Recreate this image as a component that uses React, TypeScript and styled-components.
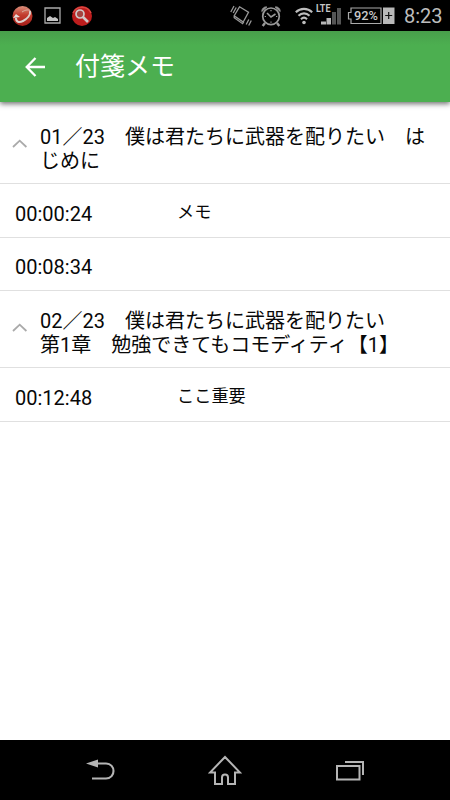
import React from 'react';
import styled, { createGlobalStyle } from 'styled-components';

const GlobalStyle = createGlobalStyle`
  * { box-sizing: border-box; }
  body {
    margin: 0;
    background: #fff;
    color: #080808;
    font-family: Roboto, "Noto Sans CJK JP", sans-serif;
  }
  svg { display: block; flex: none; }
`;

const Screen = styled.div`
  width: 450px;
  height: 800px;
  display: flex;
  flex-direction: column;
  overflow: hidden;
  background: #fff;
`;

const StatusBar = styled.div`
  height: 31px;
  flex: none;
  display: flex;
  align-items: center;
  justify-content: space-between;
  padding: 0 7px 0 12px;
  background: #000;
`;

const StatusGroup = styled.div`
  display: flex;
  align-items: center;
`;

const NotificationIcons = styled(StatusGroup)`
  gap: 10.5px;
`;

const StatusIcons = styled(StatusGroup)`
  gap: 8px;
`;

const Connectivity = styled(StatusGroup)`
  gap: 3px;
  margin-left: 5px;

  & > :last-child { margin-left: 1px; }
`;

const Clock = styled.span`
  width: 39px;
  margin-left: 1px;
  color: #bdbdbd;
  font-size: 20px;
  line-height: 31px;
  padding-top: 2px;
  white-space: nowrap;
`;

const AppBar = styled.header`
  height: 71px;
  flex: none;
  display: flex;
  align-items: center;
  padding-left: 25px;
  background: linear-gradient(#489f4b, #4caf50 14px);
  box-shadow: 0 2px 5px rgba(0, 0, 0, 0.55);
  z-index: 1;
`;

const Title = styled.h1`
  margin: 1px 0 0 29px;
  color: #fff;
  font-size: 25px;
  line-height: 36px;
  font-weight: 400;
`;

const List = styled.main`
  flex: 1;
`;

const GroupRow = styled.div<{ $height: number }>`
  height: ${(p) => p.$height}px;
  display: flex;
  align-items: flex-end;
  gap: 12px;
  padding: 0 20px 10px 12px;
  border-bottom: 1px solid #e0e0e0;

  & > svg { margin-bottom: 25px; }
`;

const GroupTitle = styled.div`
  width: 400px;
  font-size: 20px;
  line-height: 23.5px;
`;

const MemoRow = styled.div<{ $height: number }>`
  height: ${(p) => p.$height}px;
  display: flex;
  align-items: flex-end;
  padding: 0 15px 11px;
  border-bottom: 1px solid #e0e0e0;
`;

const Time = styled.span`
  width: 162px;
  font-size: 20px;
  line-height: 24px;
`;

const Note = styled.span`
  padding-bottom: 2px;
  font-size: 17.2px;
  line-height: 24px;
`;

const NavBar = styled.nav`
  height: 60px;
  flex: none;
  display: flex;
  align-items: center;
  justify-content: center;
  gap: 93px;
  background: #000;
`;

const SecurityIcon = () => (
  <svg width="21" height="22" viewBox="0 0 21 22">
    <defs>
      <linearGradient id="sphere" x1="0" y1="0" x2="0" y2="1">
        <stop offset="0" stopColor="#d9907c" />
        <stop offset="0.45" stopColor="#c23c2e" />
        <stop offset="1" stopColor="#a51d18" />
      </linearGradient>
    </defs>
    <circle cx="10.5" cy="11" r="10" fill="url(#sphere)" />
    <path d="M4 13c0 4 3 5 7 3 4-2 8-6 7-10" fill="none" stroke="#ddd0cc" strokeWidth="2" />
    <path d="M18 6c-1-2-5-1-8 1" fill="none" stroke="#ddb0a4" strokeWidth="1" />
    <path d="M1 13l3-4 4 3z" fill="#e5deda" />
  </svg>
);

const ImageIcon = () => (
  <svg width="17" height="17" viewBox="0 0 17 17">
    <path d="M1 1h15v15H1z" fill="none" stroke="#aaa" strokeWidth="1.3" />
    <path d="M3 14v-3l3-2 3 2 2-1 3 2v2z" fill="#c4c4c4" />
  </svg>
);

const SearchIcon = () => (
  <svg width="22" height="22" viewBox="0 0 22 22">
    <circle cx="11" cy="11" r="10" fill="#bd1d1d" />
    <path d="M2 8a10 10 0 0 1 18 0" fill="none" stroke="#d94640" strokeWidth="1.5" />
    <circle cx="9" cy="9" r="4" fill="#a64340" stroke="#d0c7c7" strokeWidth="1.7" />
    <path d="M12 12l5 5" stroke="#d0c7c7" strokeWidth="2.6" />
  </svg>
);

const VibrateIcon = () => (
  <svg width="22" height="22" viewBox="0 0 22 22" fill="none" stroke="#999" strokeWidth="1.3">
    <path d="M9.5 1.8l9 5.4-5.3 9.8-9-6.3zM4.2 10.7v2l8.4 6 1.3-2" />
    <path d="M.8 7L4 1M3.2 8L6.2 2.5M16.2 19.5l2.6-5M18.7 20.5l2.6-5" />
  </svg>
);

const AlarmIcon = () => (
  <svg width="22" height="22" viewBox="0 0 22 22" fill="none" stroke="#999" strokeWidth="1.7">
    <circle cx="11" cy="11.3" r="8.3" />
    <path d="M1.8 6.5c0-3 2.5-5 5-4.5zM20.2 6.5c0-3-2.5-5-5-4.5z" fill="#999" strokeWidth="1" />
    <path d="M5 18l-2.3 3M17 18l2.3 3" strokeWidth="2.4" />
    <path d="M7 8l4 4 4.5-3" strokeWidth="1.6" />
    <path d="M11 5v1.2M11 16.5v1.2M4.7 11.5H6M16 11.5h1.3" strokeWidth="1.2" />
  </svg>
);

const WifiIcon = () => (
  <svg width="18" height="19" viewBox="0 0 18 19" fill="none" stroke="#bdbdbd" strokeWidth="2.1">
    <path d="M.8 6.2c4.7-4.5 11.7-4.5 16.4 0M3.5 9.8c3.2-3.2 7.8-3.2 11 0M6 13.2c1.8-1.8 4.2-1.8 6 0" />
    <circle cx="9" cy="16.5" r="1.8" fill="#bdbdbd" stroke="none" />
  </svg>
);

const SignalIcon = () => (
  <svg width="27" height="24" viewBox="0 0 27 24">
    <text x="0" y="8" fill="#c4c4c4" fontFamily="Roboto" fontSize="10" fontWeight="700" textLength="14.5" lengthAdjust="spacingAndGlyphs">LTE</text>
    <path d="M5 17.5h5V20.5h-5zM10.5 14h4.5v6.5h-4.5z" fill="#b6b6b6" />
    <path d="M16 8h4v12.5h-4zM21 4h4v16.5h-4z" fill="#555" />
  </svg>
);

const BatteryIcon = () => (
  <svg width="48" height="18" viewBox="0 0 48 18">
    <path d="M4 1h30v15.5H4V12H1.5V5.5H4z" fill="none" stroke="#aaa" strokeWidth="1.2" />
    <text x="7" y="13.1" fill="#c8c8c8" fontFamily="Roboto" fontSize="12.5" fontWeight="500" textLength="24" lengthAdjust="spacingAndGlyphs">92%</text>
    <path d="M36 .5h11.5v16.5H36z" fill="#b9b9b9" />
    <path d="M38.2 8.5h7M41.7 5v7" stroke="#111" strokeWidth="1.2" />
  </svg>
);

const BackArrow = () => (
  <svg width="21" height="20" viewBox="0 0 21 20" fill="none" stroke="#fff" strokeWidth="2.3">
    <path d="M10.5 1L1.7 10l8.8 9M2 10h18" />
  </svg>
);

const Chevron = () => (
  <svg width="16" height="9" viewBox="0 0 16 9" fill="none" stroke="#aaa" strokeWidth="1.8">
    <path d="M1 8l6.7-6.3L14.4 8" />
  </svg>
);

const NavBack = () => (
  <svg width="30" height="22" viewBox="-1 0 30 22">
    <path d="M11 4.5h9c10 0 10 15 0 15H6" fill="none" stroke="#b5b5b5" strokeWidth="2.1" />
    <path d="M0 4.5l12-4v8z" fill="#b5b5b5" />
  </svg>
);

const NavHome = () => (
  <svg width="34" height="30" viewBox="0 0 34 30" fill="none" stroke="#b5b5b5" strokeWidth="2">
    <path d="M17 2L2 17.5h5V29h7v-6.5c0-4 6-4 6 0V29h7V17.5h5z" />
  </svg>
);

const NavRecents = () => (
  <svg width="30" height="21" viewBox="0 0 30 21" fill="none" stroke="#b5b5b5" strokeWidth="2">
    <path d="M2 6h22.5v13.5H2zM10 2h18v13" />
  </svg>
);

interface Memo {
  time: string;
  note?: string;
  height: number;
}

interface Group {
  lines: string[];
  height: number;
  memos: Memo[];
}

const groups: Group[] = [
  {
    lines: ['01／23　僕は君たちに武器を配りたい　は', 'じめに'],
    height: 82,
    memos: [
      { time: '00:00:24', note: 'メモ', height: 54 },
      { time: '00:08:34', height: 53 },
    ],
  },
  {
    lines: ['02／23　僕は君たちに武器を配りたい', '第1章　勉強できてもコモディティ【1】'],
    height: 77,
    memos: [{ time: '00:12:48', note: 'ここ重要', height: 54 }],
  },
];

export default function App() {
  return (
    <Screen>
      <GlobalStyle />
      <StatusBar>
        <NotificationIcons>
          <SecurityIcon />
          <ImageIcon />
          <SearchIcon />
        </NotificationIcons>
        <StatusIcons>
          <VibrateIcon />
          <AlarmIcon />
          <Connectivity>
            <WifiIcon />
            <SignalIcon />
            <BatteryIcon />
          </Connectivity>
          <Clock>8:23</Clock>
        </StatusIcons>
      </StatusBar>
      <AppBar>
        <BackArrow />
        <Title>付箋メモ</Title>
      </AppBar>
      <List>
        {groups.map((group) => (
          <section key={group.lines[0]}>
            <GroupRow $height={group.height}>
              <Chevron />
              <GroupTitle>
                {group.lines.map((line) => (
                  <div key={line}>{line}</div>
                ))}
              </GroupTitle>
            </GroupRow>
            {group.memos.map((memo) => (
              <MemoRow key={memo.time} $height={memo.height}>
                <Time>{memo.time}</Time>
                {memo.note && <Note>{memo.note}</Note>}
              </MemoRow>
            ))}
          </section>
        ))}
      </List>
      <NavBar>
        <NavBack />
        <NavHome />
        <NavRecents />
      </NavBar>
    </Screen>
  );
}
